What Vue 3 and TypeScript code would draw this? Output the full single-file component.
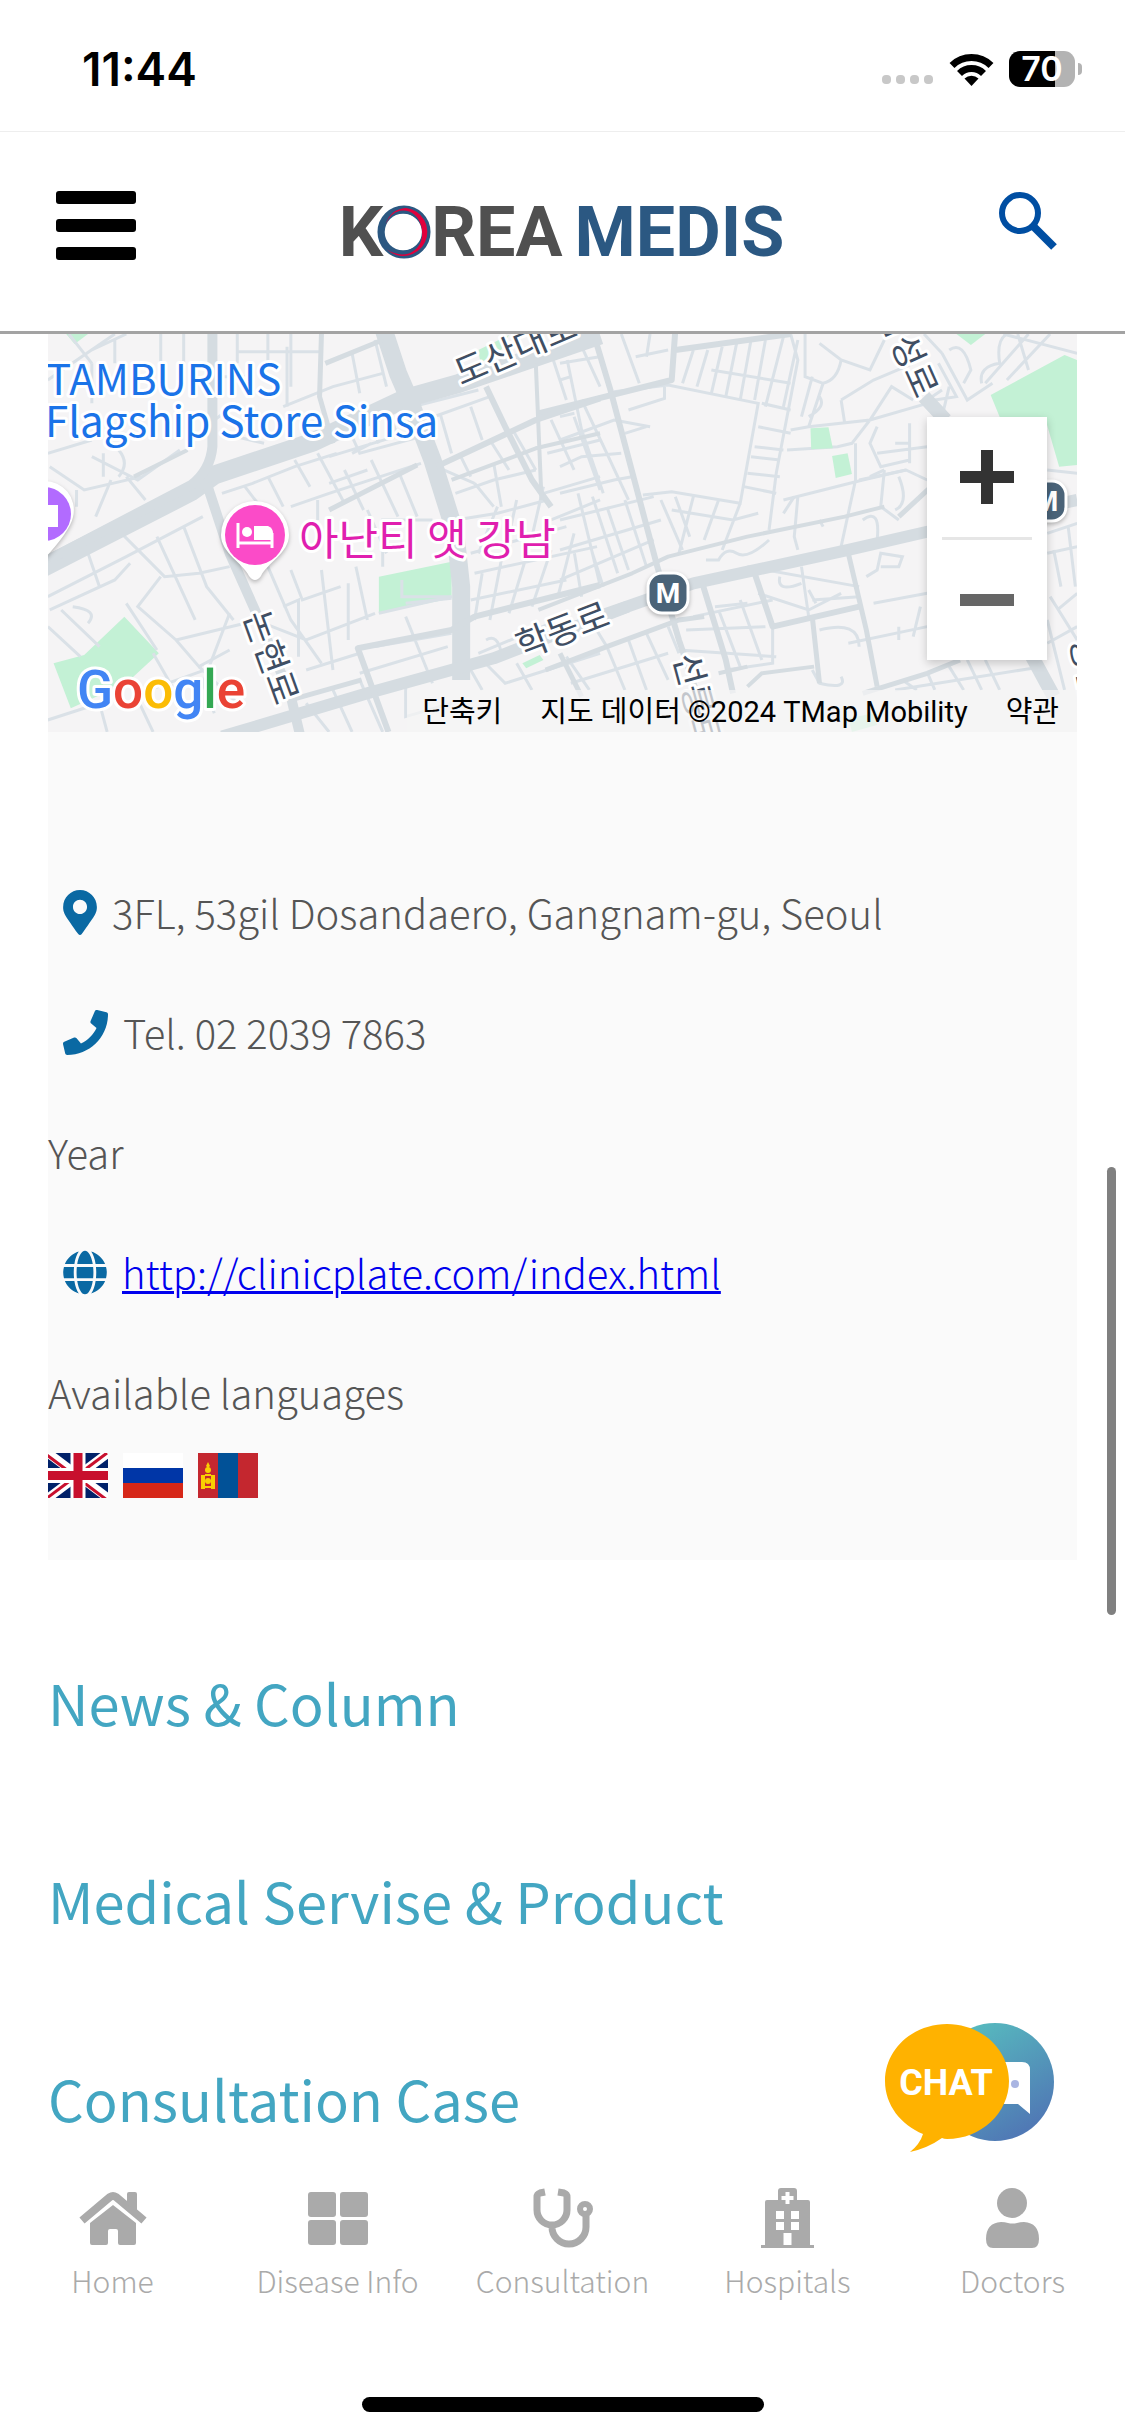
<script setup lang="ts">
interface Tab { id: string; label: string }
const tabs: Tab[] = [
  { id: 'home', label: 'Home' },
  { id: 'disease', label: 'Disease Info' },
  { id: 'consult', label: 'Consultation' },
  { id: 'hospital', label: 'Hospitals' },
  { id: 'doctor', label: 'Doctors' },
]
const sections: string[] = ['News & Column', 'Medical Servise & Product', 'Consultation Case']

// Street map geometry for the western and eastern tiles: [path, stroke width]
type Road = [string, number]
const westRoads: Road[] = [
  ['M100 750L500 515L560 465L820 365L1060 235L1200 190L1568 45', 19],
  ['M555 30V380Q550 450 500 495L100 735', 10],
  ['M1000 20L1040 160L1070 240L1130 420L1190 640L1205 800V1080', 18],
  ['M540 490L600 700L670 880L760 1130L785 1250', 10],
  ['M580 1250L960 1120L1290 1015L1640 860', 12],
  ['M1015 1236L935 985L1180 930L1240 890L1568 795', 6],
  ['M840 42L835 230L870 370M850 130L1000 60', 5],
  ['M1270 200L1320 320L1390 480L1440 560M1140 440L1400 300L1568 235', 6],
  ['M1400 130L1415 540M1180 480L1400 385L1568 340', 4],
  ['M760 1140L945 1080M860 570L1090 435', 5],
  ['M350 470L490 390', 4],
]
const eastRoads: Road[] = [
  ['M80 900L370 790L800 690L1040 630L1435 540', 12],
  ['M-60 870L200 760L300 710L520 650L790 590L900 560', 4],
  ['M90 30L140 210L270 740L330 960L380 1120L420 1236', 6],
  ['M-60 280L310 180L320 30M320 90L640 42', 6],
  ['M395 790L460 1020L480 1120M540 760L590 920L830 860', 6],
  ['M800 700L850 930L880 1100M700 890L720 1090', 5],
  ['M-40 1050L130 980L330 900L400 890M0 1000L60 1130', 5],
  ['M1010 230L1070 300M1305 1000L1370 1130', 14],
  ['M840 1120L1019 1060L1110 1020M940 590L1030 500', 5],
  ['M520 1100L560 1060L705 1040M440 1060L520 1040', 4],
]
const westLanes: string[] = [
  'M125 180L300 42M180 42L240 130M240 90L330 42M300 60V130M420 42V130M480 42V130M620 95H840M620 42V130M760 42V200M700 42V130',
  'M125 400L240 360M240 130V250M240 410L360 480L470 390M130 440L220 510L370 470M330 470L380 540M290 480L250 590M200 510V560M270 400V470M310 390Q340 430 310 470',
  'M560 170H640M560 300L620 250M740 260L870 200L1000 160M750 80V260M920 100L940 220M980 60L1010 200',
  'M580 340L690 370M860 410L1060 340M900 300L940 400L1100 350M960 290L990 370M1010 260L1040 350M920 400L970 370M1080 260L1250 210',
  'M580 520L660 490L770 440L880 400M640 500L680 560M700 470L740 560M770 420L810 500M830 400L900 550M900 450L950 570M970 420L1040 590M1040 450L1090 590M760 560L860 520L1100 430M830 540V600M860 490L960 450',
  'M300 620L430 770L520 760L600 740M125 830L330 710L530 590M340 730L300 780L130 870M230 700L260 800M410 650L510 900M480 620L540 800L610 900M420 770L360 860L460 960L520 1040L600 990M330 850L410 990M160 870L260 980M190 860Q260 870 230 910',
  'M125 920L210 1010M340 1090L400 1236M400 1000L500 1200M460 960L640 910M520 1040L630 1160M390 1110L560 1040M600 880L530 1090L560 1180M125 1200L260 1150M260 1150L280 1236',
  'M700 740L760 900L840 1030M760 750L790 840L890 800M740 860L780 840V1010M840 750L870 1050M910 790V960M930 740L960 900M690 910L800 960L980 880M800 1050L940 1000M990 880L1180 830',
  'M1000 740V600L1130 600M960 570L1010 700M1060 850L1180 835M1050 780V830H1180M1060 890L1130 1090M980 980L1180 940M940 1060L1170 980M800 1150L860 1236M870 1110L920 1236M940 1080L1000 1236',
  'M1190 520L1290 480L1400 450M1190 600L1300 580L1430 540M1240 490L1290 560M1290 430L1310 560M1230 700L1480 620M1240 760L1560 680M1300 560L1250 700M1350 540L1320 700M1420 500L1390 650M1260 760L1240 900M1310 720L1280 900M1370 730L1330 880M1440 690L1390 860M1230 840L1480 780M1500 640L1460 820M1250 1000L1460 900',
  'M1140 440L1240 490M1200 400L1230 470M1280 360L1330 450M1340 330L1400 450M1440 300L1500 450M1430 400L1568 360M1500 290L1568 510M1420 520L1568 470M1440 600L1568 540M1110 300L1280 230M1150 280L1180 400M1230 260L1260 360M1440 100L1480 240M1520 80L1568 200',
  'M1260 1020L1320 1090L1568 1000M1270 960Q1300 940 1310 1000M1480 1010L1540 1110M1350 1030L1390 1110M1060 1100L1060 1190L1180 1150M1230 1050L1260 1110',
]
const eastLanes: string[] = [
  'M0 60L90 42M0 130L110 110M20 120L60 330L120 520M60 240L130 400L190 540M0 180L30 170M0 290L40 280M0 360L150 300L250 320M0 440L60 410L170 400M0 520L150 480L200 470M170 42L220 190M210 110L300 90M250 42L240 110',
  'M370 90L340 190M410 90L380 200M450 80L420 220M490 70L460 230M530 60L500 240M570 60L540 240M620 50L570 260M660 60L620 260M420 150L640 190M640 42L660 120L600 460L580 630M560 250L640 270M550 320L640 340M540 380L620 390M530 410L610 420M520 460L610 470M510 500L600 520',
  'M150 215L300 195L550 250L500 550L310 515L230 525M190 270L290 235V195M180 340L240 320M320 530L360 650M370 530L330 700M500 550L450 690M440 540L400 660M310 570L480 600L550 580M280 540L340 690M180 540L240 740M130 560L190 750M90 530L160 760M50 520L110 790M0 600L260 530M0 690L280 600M0 780L260 660M40 700L60 830M90 700L120 800',
  'M680 42V170L730 190L690 320M720 70L780 120L860 150L900 60M730 190Q770 180 780 120M780 240L870 180L980 130M700 170L670 290M720 230Q740 260 690 290M780 240L790 310M690 320L860 300L920 200L980 240M640 330L690 320M630 390L770 380L810 370L860 300M860 300L1019 250M820 370V480L780 680M620 540L840 480L960 450M660 530L650 650L660 690',
  'M880 320L860 370L890 440L970 420M970 310V430M930 370H970M880 400L1019 380M900 450L890 560L940 600M940 470Q970 550 930 570M840 600Q890 560 880 660M720 600L730 620M620 580L650 530M830 480L960 450L1019 480',
  'M405 720H440Q460 680 490 700T580 660M610 770Q600 820 670 790M670 740L690 890M520 740L830 800M550 820L690 870L780 820M700 840L830 830M850 770L880 750L890 700L950 710L940 740H890M720 930Q830 900 830 980M800 970L1019 920M940 920V960M1000 860L980 950M870 850L1019 820M430 860L520 850M690 810L710 850',
  'M370 890L590 840M350 930L570 920M330 990L600 1010M590 920V1030L460 1050M440 870L500 1040M500 840L560 1020M700 1050L720 1090Q800 1110 780 1070M30 1090L300 1000M130 980L180 1110M190 960L240 1110M240 940L300 1080M300 920L330 1000M90 910L130 980M950 1080L990 1110M1020 1060L1040 1110M1080 1040L1120 1110M1130 1020L1170 1110M1180 1020L1220 1110M930 1110L1340 1040',
  'M1060 100L1130 240L1200 190M1080 90Q1120 60 1140 150L1120 190M1170 190Q1160 140 1220 130Q1210 60 1240 42M1180 190L1300 42M1240 180L1360 42M1050 130L1100 230L1040 240M1080 200L1060 290M1300 150L1270 42M1230 42L1435 100M1010 42L1060 100',
  'M1352 640L1435 610M1352 700L1435 680M1370 690L1390 800M1360 830L1435 960M1380 870L1435 820M1352 900L1400 1110M1410 620L1430 800M1352 450L1435 460M1060 210L1019 240M860 470L900 450M1352 970L1435 920',
]
const westParks: string[] = [
  'M173 42H230L195 72Z', 'M140 1030L220 1005L325 890L415 1000L330 1090L185 1165Z',
  'M990 770L1180 725V835L990 880Z', 'M1365 1030L1410 1005L1420 1020L1375 1045Z', 'M1250 90L1330 45L1300 110L1255 125Z',
]
const eastParks: string[] = [
  'M1195 225L1400 105L1435 120V435L1385 440L1350 310L1220 291Z', 'M695 325L745 322L757 385L697 388Z',
  'M755 408L798 400L810 462L765 474Z', 'M1100 42H1180L1140 75Z', 'M800 1195L870 1180L880 1215L810 1236Z',
]
</script>

<template>
  <div class="page">
    <div class="status">
      <span class="time">11:44</span>
      <div class="status-icons">
        <svg class="dots" viewBox="0 0 52 10"><rect v-for="n in 4" :key="n" :x="n * 14 - 14" y="0" width="9" height="9" rx="4" /></svg>
        <svg class="wifi" viewBox="0 0 45 34" fill="none" stroke="#000" stroke-width="7">
          <path d="M3 13.500a28 28 0 0 1 39 0" /><path d="M10.500 21.500a17 17 0 0 1 24 0" />
          <path d="M22.500 34l-7-7.500a10.500 10.500 0 0 1 14 0z" fill="#000" stroke="none" />
        </svg>
        <div class="battery"><span>70</span></div>
      </div>
    </div>

    <header class="header">
      <button class="icon-btn" aria-label="Menu">
        <svg width="80" height="70" viewBox="0 0 80 70"><rect width="80" height="13" rx="3" /><rect y="28" width="80" height="13" rx="3" /><rect y="56" width="80" height="13" rx="3" /></svg>
      </button>
      <a class="logo" href="#" aria-label="Korea Medis">
        <span>K</span>
        <svg viewBox="0 0 56 56" fill="none">
          <circle cx="28" cy="28" r="23" stroke="#2b5882" stroke-width="9" />
          <path d="M9 20Q14 4 30 3A25 25 0 1 1 10 46Q22 54 34 50Q50 42 46 22Q40 4 24 6Q14 8 9 20Z" fill="#e0003c" />
          <circle cx="27" cy="28" r="19" fill="#fff" />
        </svg>
        <span>REA</span><span class="medis">MEDIS</span>
      </a>
      <button class="icon-btn search" aria-label="Search">
        <svg width="58" height="58" viewBox="0 0 58 58" fill="none" stroke="#004ea2"><circle cx="21" cy="21" r="18" stroke-width="6" /><path d="M34 34L55 55" stroke-width="8" /></svg>
      </button>
    </header>

    <main>
      <section class="panel">
        <div class="map">
          <svg class="streets" viewBox="0 0 1029 398" preserveAspectRatio="xMidYMid slice">
            <rect width="1029" height="398" fill="#f5f4f5" />
            <g transform="translate(-48 -14) scale(.3827 .3333)">
              <path v-for="d in westParks" :key="d" :d="d" class="park" />
              <path v-for="d in westLanes" :key="d" :d="d" class="lane" />
            </g>
            <g transform="translate(512 -14) scale(.3604 .3333)">
              <path v-for="d in eastLanes" :key="d" :d="d" class="lane" />
              <path v-for="d in eastParks" :key="d" :d="d" class="park" />
              <path v-for="[d, w] in eastRoads" :key="d" :d="d" :stroke-width="w" class="road" />
            </g>
            <g transform="translate(-48 -14) scale(.3827 .3333)">
              <path v-for="[d, w] in westRoads" :key="d" :d="d" :stroke-width="w" class="road" />
            </g>
            <g class="place">
              <text x="-2" y="61">TAMBURINS</text>
              <text x="-3" y="103">Flagship Store Sinsa</text>
            </g>
            <text class="hotel" x="251" y="221">아난티 앳 강남</text>
            <g class="street">
              <text transform="translate(413 52) rotate(-23)">도산대로</text>
              <text transform="translate(474 325) rotate(-21)">학동로</text>
              <text transform="translate(195 282) rotate(70)">논현로</text>
              <text transform="translate(829 -22) rotate(66)">삼성로</text>
              <text transform="translate(625 323) rotate(75)">선릉로</text>
              <text transform="translate(1022 306) rotate(78)">봉은</text>
            </g>
            <g class="pin">
              <path d="M-4 147a29 29 0 0 1 29 36q-3 14-29 42z" fill="#fff" />
              <circle cx="-4" cy="180" r="27" fill="#b26bff" /><rect x="-4" y="171" width="14" height="22" fill="#fff" />
            </g>
            <g class="pin">
              <path d="M207 167a34 34 0 0 1 34 34c0 18-22 28-28 41q-6 8-12 0c-6-13-28-23-28-41a34 34 0 0 1 34-34z" fill="#fff" />
              <circle cx="207" cy="201" r="30" fill="#fb4bc8" />
              <path d="M190 189v25M190 209h34M224 214v-15" stroke="#fff" stroke-width="3" fill="none" />
              <circle cx="199" cy="198" r="5" fill="#fff" /><path d="M206 192h14q5 2 5 7v7h-19z" fill="#fff" />
            </g>
            <g class="metro">
              <rect x="600" y="239" width="40" height="40" rx="14" /><text x="620" y="269">M</text>
              <rect x="978" y="147" width="40" height="40" rx="14" /><text x="998" y="177">M</text>
            </g>
            <text class="google" x="29" y="374"><tspan fill="#4285f4">G</tspan><tspan fill="#ea4335">o</tspan><tspan fill="#fbbc05">o</tspan><tspan fill="#4285f4">g</tspan><tspan fill="#34a853">l</tspan><tspan fill="#ea4335">e</tspan></text>
          </svg>
          <div class="zoom">
            <button aria-label="Zoom in"><svg width="54" height="54" viewBox="0 0 54 54"><path d="M0 27H54M27 0V54" stroke="#333" stroke-width="12" /></svg></button>
            <i></i>
            <button aria-label="Zoom out"><svg width="54" height="54" viewBox="0 0 54 54"><path d="M0 27H54" stroke="#666" stroke-width="12" /></svg></button>
          </div>
          <div class="credit"><a href="#">단축키</a><span>지도 데이터 ©2024 TMap Mobility</span><a href="#">약관</a></div>
        </div>

        <div class="details">
          <p class="with-icon">
            <svg width="34" height="45" viewBox="0 0 384 512"><path d="M172.268 501.67C26.97 291.031 0 269.413 0 192 0 85.961 85.961 0 192 0s192 85.961 192 192c0 77.413-26.970 99.031-172.268 309.670-9.535 13.774-29.930 13.773-39.464 0zM192 272c44.183 0 80-35.817 80-80s-35.817-80-80-80-80 35.817-80 80 35.817 80 80 80z" /></svg>
            <span>3FL, 53gil Dosandaero, Gangnam-gu, Seoul</span>
          </p>
          <p class="with-icon">
            <svg width="45" height="45" viewBox="0 0 512 512"><path d="M493.400 24.600l-104-24c-11.300-2.600-22.900 3.300-27.500 13.900l-48 112c-4.200 9.800-1.400 21.300 6.900 28l60.600 49.600c-36 76.700-98.900 140.500-177.200 177.200l-49.600-60.600c-6.800-8.300-18.200-11.100-28-6.900l-112 48C3.900 366.500-2 378.100.6 389.400l24 104C27.100 504.200 36.700 512 48 512c256.100 0 464-207.500 464-464 0-11.200-7.700-20.900-18.600-23.400z" /></svg>
            <span>Tel. 02 2039 7863</span>
          </p>
          <p>Year</p>
          <p class="with-icon">
            <svg width="44" height="45" viewBox="0 0 496 512"><path d="M336.500 160C322 70.700 287.800 8 248 8s-74 62.700-88.500 152h177zM152 256c0 22.200 1.200 43.500 3.300 64h185.300c2.100-20.500 3.300-41.800 3.300-64s-1.200-43.500-3.300-64H155.300c-2.100 20.500-3.300 41.800-3.300 64zm324.700-96c-28.600-67.900-86.500-120.400-158-141.600 24.400 33.800 41.200 84.700 50 141.600h108zM177.200 18.400C105.800 39.600 47.800 92.100 19.300 160h108c8.700-56.900 25.500-107.800 49.900-141.600zM487.400 192H372.700c2.100 21 3.300 42.500 3.300 64s-1.200 43-3.300 64h114.600c5.500-20.500 8.600-41.800 8.600-64s-3.100-43.500-8.500-64zM120 256c0-21.500 1.200-43 3.300-64H8.600C3.200 212.500 0 233.800 0 256s3.200 43.500 8.600 64h114.600c-2-21-3.200-42.500-3.200-64zm39.500 96c14.500 89.300 48.700 152 88.500 152s74-62.700 88.500-152h-177zm159.300 141.600c71.400-21.200 129.400-73.700 158-141.600h-108c-8.800 56.900-25.600 107.800-50 141.600zM19.300 352c28.600 67.900 86.500 120.400 158 141.600-24.400-33.800-41.200-84.700-50-141.600h-108z" /></svg>
            <a href="http://clinicplate.com/index.html">http://clinicplate.com/index.html</a>
          </p>
          <p class="langs-title">Available languages</p>
          <div class="flags">
            <svg viewBox="0 0 60 45">
              <rect width="60" height="45" fill="#012169" />
              <path d="M0 0L60 45M60 0L0 45" stroke="#fff" stroke-width="9" />
              <path d="M0 0L30 22.500M60 45L30 22.500" stroke="#c8102e" stroke-width="3" transform="translate(-1 2)" /><path d="M60 0L30 22.500L0 45" stroke="#c8102e" stroke-width="3" fill="none" transform="translate(-1 0)" />
              <path d="M30 0V45M0 22.500H60" stroke="#fff" stroke-width="15" /><path d="M30 0V45M0 22.500H60" stroke="#c8102e" stroke-width="9" />
            </svg>
            <svg viewBox="0 0 60 45"><rect width="60" height="45" fill="#fff" /><rect y="15" width="60" height="15" fill="#0036a7" /><rect y="30" width="60" height="15" fill="#d62718" /></svg>
            <svg viewBox="0 0 60 45">
              <rect width="60" height="45" fill="#c4272f" /><rect x="20" width="20" height="45" fill="#015197" />
              <g fill="#f9cf02"><path d="M3 22h4v14H3zM13 22h4v14h-4zM7 21h6v2H7zM7 33h6v2H7z" /><circle cx="10" cy="17" r="3" /><path d="M10 9l2 4-2 2-2-2z" /><circle cx="10" cy="28" r="3" /></g>
            </svg>
          </div>
        </div>
      </section>

      <section class="sections">
        <h2 v-for="s in sections" :key="s">{{ s }}</h2>
      </section>
    </main>

    <button class="chat" aria-label="Chat">
      <svg width="170" height="132" viewBox="0 0 170 132">
        <defs><linearGradient id="chatBlue" x1="0" y1="0" x2=".6" y2="1"><stop offset="0" stop-color="#58c5c0" /><stop offset="1" stop-color="#5079b5" /></linearGradient></defs>
        <circle cx="110" cy="59" r="59" fill="url(#chatBlue)" />
        <path d="M110 39h27q8 0 8 8v44l-12-10h-23z" fill="#fff" /><circle cx="130" cy="61" r="4" fill="#a9b5e2" />
        <path d="M62 1c34 0 62 25 62 57s-28 58-62 58q-3 0-5-1-14 10-32 14 10-8 13-18C16 102 0 82 0 58 0 26 28 1 62 1z" fill="#ffb200" />
        <text x="61" y="72" text-anchor="middle">CHAT</text>
      </svg>
    </button>

    <nav class="tabs">
      <a v-for="t in tabs" :key="t.id" href="#">
        <svg v-if="t.id === 'home'" width="68" height="60" viewBox="0 -3 68 60">
          <path d="M3 29.500L31 6q3-2 6 0L65 29.500" fill="none" stroke="#aaa" stroke-width="8" /><path d="M48 13V3q0-2 2-2h6q2 0 2 2v18z" />
          <path d="M34 14L57 32v20q0 2-2 2H41q-2 0-2-2V40q0-2-2-2h-6q-2 0-2 2v12q0 2-2 2H13q-2 0-2-2V32z" />
        </svg>
        <svg v-else-if="t.id === 'disease'" width="60" height="60" viewBox="0 0 60 60">
          <rect y="4" width="28" height="25" rx="3" /><rect x="32" y="4" width="28" height="25" rx="3" /><rect y="32" width="28" height="25" rx="3" /><rect x="32" y="32" width="28" height="25" rx="3" />
        </svg>
        <svg v-else-if="t.id === 'consult'" width="60" height="60" viewBox="0 1 60 60" fill="none" stroke="#aaa" stroke-width="7">
          <path d="M12 5L7 6Q4 7 4 10V23a15 15 0 0 0 30 0V10q0-3-3-4L25 5M19 38v2a17 17 0 0 0 34 0V28" /><circle cx="52" cy="22" r="5" stroke-width="6" />
        </svg>
        <svg v-else-if="t.id === 'hospital'" width="53" height="60" viewBox="0 0 53 60">
          <path fill-rule="evenodd" d="M17 12V3q0-3 3-3h13q3 0 3 3v9h11q2 0 2 2v43h4v3H0v-3h4V14q0-2 2-2zM24.500 4v4h-4v4h4v4h4v-4h4V8h-4V4zM15 23v8h8v-8zM30 23v8h8v-8zM15 34v8h8v-8zM30 34v8h8v-8zM22.500 45v12h8V45z" />
        </svg>
        <svg v-else width="53" height="60" viewBox="0 0 53 60">
          <circle cx="26" cy="15" r="15" /><path d="M15 34q4 0 7 1 4.500 1 9 0 3-1 7-1 15 1 15 17 0 9-7 9H7q-7 0-7-9 0-16 15-17z" />
        </svg>
        <span>{{ t.label }}</span>
      </a>
    </nav>
    <div class="home-bar"></div>
    <div class="scroll-thumb"></div>
  </div>
</template>

<style>
body { margin: 0; background: #fff; }
</style>

<style scoped>
.page { position: relative; display: flex; flex-direction: column; min-height: 100vh; box-sizing: border-box; background: #fff; font-family: "Noto Sans CJK KR", sans-serif; color: #555; }
button { border: 0; padding: 0; background: none; cursor: pointer; }
svg { display: block; flex: none; }
main { flex: 1; padding: 0 48px; }

.status { display: flex; justify-content: space-between; align-items: center; height: 132px; padding: 6px 42px 0 82px; box-sizing: border-box; border-bottom: 1px solid #eee; color: #000; }
.time { font: 600 46px/1 Inter, sans-serif; }
.status-icons { display: flex; align-items: center; gap: 15px; }
.dots { width: 52px; height: 10px; margin-top: 22px; fill: #c8c8c8; }
.wifi { width: 45px; height: 34px; }
.battery { position: relative; width: 66px; height: 36px; margin-right: 8px; border-radius: 11px; background: linear-gradient(90deg, #000 70%, #b3b3b3 70%); text-align: center; color: #fff; font: 600 34px/36px Inter, sans-serif; }
.battery::after { content: ""; position: absolute; right: -7px; top: 12px; width: 4px; height: 12px; border-radius: 0 4px 4px 0; background: #b3b3b3; }

.header { display: flex; justify-content: space-between; align-items: center; height: 202px; padding: 0 68px 12px 56px; box-sizing: border-box; border-bottom: 3px solid #a3a3a3; }
.search { margin-bottom: 10px; }
.logo { display: flex; align-items: center; margin: 12px 12px 0 0; color: #505050; text-decoration: none; font: 700 70px/54px Roboto, sans-serif; }
.logo svg { width: 54px; height: 54px; margin: 0 0 0 -6px; }
.logo .medis { margin-left: 12px; color: #2b5882; }

.panel { background: #fafafa; }
.map { position: relative; overflow: hidden; height: 398px; }
.streets { width: 100%; height: 100%; }
.park { fill: #c3f1d5; }
.lane { fill: none; stroke: #dae1e7; stroke-width: 3; vector-effect: non-scaling-stroke; }
.road { fill: none; stroke: #d5dce1; stroke-linejoin: round; vector-effect: non-scaling-stroke; }
.streets text { paint-order: stroke; stroke: #fff; stroke-width: 6px; stroke-linejoin: round; }
.place { font-size: 42px; fill: #1a73e8; }
.hotel { font-size: 43px; fill: #e01faf; }
.street { font-size: 35px; fill: #3f4e63; }
.pin { filter: drop-shadow(0 2px 2px #0004); }
.metro rect { fill: #4a6378; stroke: #fff; stroke-width: 3; filter: drop-shadow(0 2px 2px #0004); }
.metro text { stroke: none; fill: #fff; text-anchor: middle; font: 700 28px Roboto, sans-serif; }
.google { font: 500 53px Roboto, sans-serif; }
.zoom { position: absolute; top: 83px; right: 30px; display: flex; flex-direction: column; align-items: center; width: 120px; background: #fff; box-shadow: 0 3px 9px #0003; }
.zoom button { display: grid; place-items: center; width: 120px; height: 120px; }
.zoom i { width: 90px; height: 3px; background: #e6e6e6; }
.credit { position: absolute; right: 0; bottom: 0; display: flex; gap: 38px; padding: 2px 18px 0 15px; background: #f5f5f5b8; color: #000; font: 29px/40px Roboto, "Noto Sans CJK KR", sans-serif; }
.credit a { color: inherit; text-decoration: none; }

.details { padding: 150px 0 62px; }
.details p { margin: 0 0 60px; font-size: 40px; line-height: 60px; font-weight: 300; }
.details .with-icon { display: flex; align-items: center; gap: 15px; padding-left: 15px; }
.with-icon svg { fill: #0a69a3; }
.details a { color: #00e; text-decoration-thickness: 3px; }
.details .langs-title { margin-bottom: 31px; }
.flags { display: flex; gap: 15px; }
.flags svg { width: 60px; height: 45px; }

.sections { display: flex; flex-direction: column; gap: 118px; padding-top: 102px; }
.sections h2 { margin: 0; color: #43a6c2; font-size: 56px; line-height: 80px; font-weight: 400; }

.chat { position: absolute; right: 70px; bottom: 281px; }
.chat text { fill: #fff; font: 700 36px Roboto, sans-serif; }

.tabs { display: flex; height: 145px; padding-top: 17px; }
.tabs a { flex: 1; display: flex; flex-direction: column; align-items: center; gap: 9px; color: #aaa; text-decoration: none; font-size: 30px; line-height: 46px; font-weight: 300; }
.tabs svg { fill: #aaa; }
.tabs svg[fill="none"] { fill: none; }
.home-bar { width: 402px; height: 15px; margin: 64px auto 24px; border-radius: 8px; background: #000; }
.scroll-thumb { position: absolute; top: 1167px; right: 9px; width: 9px; height: 448px; border-radius: 5px; background: #808080; }
</style>
